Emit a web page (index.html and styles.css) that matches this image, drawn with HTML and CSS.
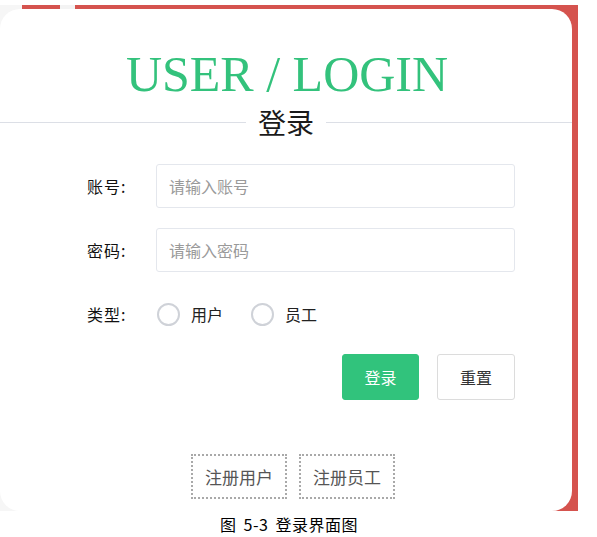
FILE: index.html
```html
<!DOCTYPE html>
<html lang="zh-CN">
<head>
<meta charset="utf-8">
<title>登录</title>
<link rel="stylesheet" href="styles.css">
</head>
<body>
<div class="frame">
  <div class="card">
    <div class="title">USER / LOGIN</div>
    <div class="divider"><span class="divider-text">登录</span></div>
    <div class="form">
      <label class="label">账号:</label>
      <div class="input">请输入账号</div>
      <label class="label">密码:</label>
      <div class="input">请输入密码</div>
      <label class="label">类型:</label>
      <div class="radios">
        <span class="radio"><span class="circle"></span><span class="radio-text">用户</span></span>
        <span class="radio"><span class="circle"></span><span class="radio-text">员工</span></span>
      </div>
    </div>
    <div class="actions">
      <button class="btn btn-primary">登录</button>
      <button class="btn btn-default">重置</button>
    </div>
    <div class="register">
      <span class="reg">注册用户</span>
      <span class="reg">注册员工</span>
    </div>
  </div>
</div>
<div class="caption">图 5-3 登录界面图</div>
</body>
</html>
```
FILE: styles.css
```css
html, body {
  margin: 0;
  padding: 0;
  background: #ffffff;
}
body {
  width: 597px;
  height: 537px;
  overflow: hidden;
  font-family: "Noto Sans CJK SC", "Noto Sans", sans-serif;
}
.frame {
  margin-top: 5px;
  width: 578px;
  height: 506px;
  box-sizing: border-box;
  padding: 4px 6px 0 0;
  background:
    linear-gradient(to right, #f6f6f6 22px, #d5534e 22px, #d5534e 60px, #f3f3f3 60px, #f3f3f3 75px, #d5534e 75px) top left / 100% 4px no-repeat,
    linear-gradient(to right, #f6f6f6 50%, #d5534e 50%);
}
.card {
  height: 502px;
  background: #ffffff;
  border-radius: 20px;
  box-sizing: border-box;
  padding-top: 40px;
}
.title {
  font-family: "Liberation Serif", "Times New Roman", serif;
  font-size: 50px;
  line-height: 50px;
  color: #33c27c;
  text-align: center;
  padding-left: 2px;
}
.divider {
  margin-top: 9px;
  height: 28px;
  display: flex;
  align-items: center;
}
.divider::before,
.divider::after {
  content: "";
  flex: 1;
  height: 1px;
  background: #dcdfe6;
}
.divider-text {
  font-size: 28px;
  line-height: 28px;
  color: #1a1a1a;
  padding: 0 12px;
}
.form {
  margin: 28px 0 0 87px;
  width: 428px;
  display: grid;
  grid-template-columns: 69px 359px;
  grid-auto-rows: 44px;
  row-gap: 20px;
  align-items: center;
}
.label {
  font-size: 16px;
  color: #111;
  line-height: 20px;
  letter-spacing: 1px;
}
.input {
  height: 44px;
  box-sizing: border-box;
  border: 1px solid #e4e7ed;
  border-radius: 3px;
  padding-left: 12px;
  display: flex;
  align-items: center;
  font-size: 16px;
  color: #9a9a9a;
}
.radios {
  display: flex;
  align-items: center;
  gap: 27px;
}
.radio {
  display: flex;
  align-items: center;
  gap: 11px;
}
.circle {
  width: 23px;
  height: 23px;
  box-sizing: border-box;
  border: 2px solid #cfd2d8;
  border-radius: 50%;
  margin-left: 1px;
}
.radio-text {
  font-size: 16px;
  color: #222;
}
.actions {
  margin: 18px 0 0 87px;
  width: 428px;
  display: flex;
  justify-content: flex-end;
  gap: 18px;
}
.btn {
  height: 46px;
  box-sizing: border-box;
  border-radius: 3px;
  font-family: "Noto Sans CJK SC", sans-serif;
  font-size: 16px;
  padding: 0;
  cursor: pointer;
}
.btn-primary {
  width: 77px;
  background: #31c37c;
  border: 1px solid #31c37c;
  color: #ffffff;
}
.btn-default {
  width: 78px;
  background: #ffffff;
  border: 1px solid #dcdcdc;
  color: #333;
}
.register {
  margin-top: 54px;
  display: flex;
  justify-content: center;
  gap: 12px;
  padding-left: 14px;
}
.reg {
  width: 96px;
  height: 45px;
  box-sizing: border-box;
  border: 2px dotted #a9a9a9;
  display: flex;
  align-items: center;
  justify-content: center;
  font-size: 17px;
  color: #555;
}
.caption {
  margin-top: 4px;
  width: 578px;
  text-align: center;
  font-size: 16px;
  line-height: 18px;
  color: #000;
  word-spacing: 3px;
  letter-spacing: 0.5px;
}
```
